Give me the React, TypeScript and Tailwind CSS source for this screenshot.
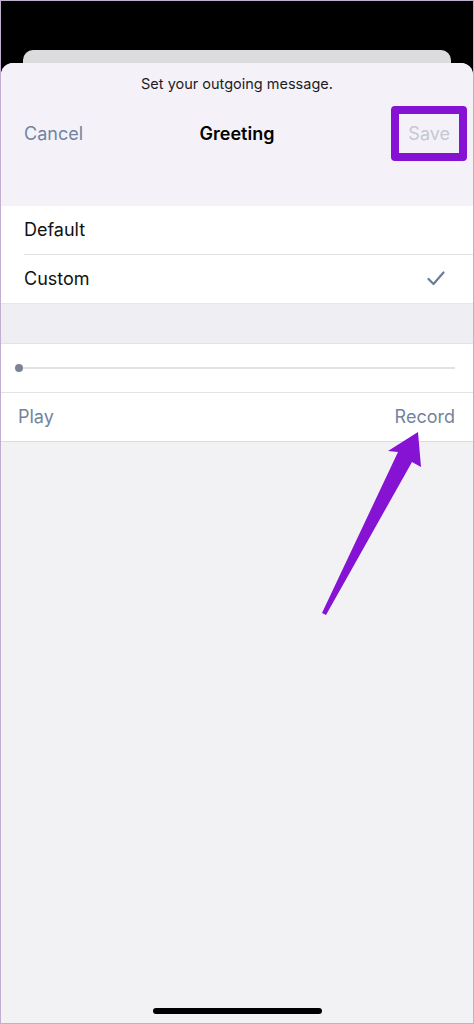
import React from "react";

export default function App() {
  return (
    <div
      className="relative w-[474px] h-[1024px] bg-black overflow-hidden flex flex-col border border-[#bfb0cf]"
      style={{ fontFamily: "Inter, 'Noto Sans', 'Liberation Sans', sans-serif" }}
    >
      <div className="h-[49px] shrink-0" />
      <div className="mx-[22px] h-[13px] shrink-0 rounded-t-[10px] bg-[#dcdcdf]" />
      <div className="flex-1 flex flex-col rounded-t-[12px] bg-[#f2f2f5] overflow-hidden">
        {/* header */}
        <div className="h-[143px] shrink-0 bg-[#f4f2f8] flex flex-col">
          <div className="pt-[11px] h-[20px] box-content text-center text-[14.5px] leading-[20px] text-[#1c1c1e]">
            Set your outgoing message.
          </div>
          <div className="mt-[17px] h-[44px] grid grid-cols-[1fr_auto_1fr] items-center px-[23px]">
            <span className="text-[18px] text-[#7284a0] justify-self-start">Cancel</span>
            <span className="text-[18px] font-semibold text-black">Greeting</span>
            <span className="text-[18px] text-[#c5c8d0] justify-self-end">Save</span>
          </div>
        </div>
        {/* options */}
        <div className="bg-white shrink-0">
          <div className="h-[48px] flex items-center pl-[23px] pb-[2px] text-[18px] text-[#111]">Default</div>
          <div className="ml-[23px] h-px bg-[#e3e3e6]" />
          <div className="h-[48px] flex items-center justify-between pl-[23px] pr-[28px] pb-[2px] text-[18px] text-[#111]">
            <span>Custom</span>
            <svg width="18" height="15" viewBox="0 0 18 15" fill="none">
              <path d="M1.5 8 L6.5 13 L16.5 1.5" stroke="#6b7c99" strokeWidth="2.2" strokeLinecap="round" strokeLinejoin="round" />
            </svg>
          </div>
        </div>
        <div className="h-px bg-[#e6e6ea] shrink-0" />
        <div className="h-[39px] shrink-0 bg-[#efeff3]" />
        {/* player */}
        <div className="bg-white shrink-0 border-t border-[#e3e3e6]">
          <div className="h-[48px] flex items-center pl-[14px] pr-[18px]">
            <div className="w-[8px] h-[8px] rounded-full bg-[#7d8396] shrink-0" />
            <div className="flex-1 h-[2px] bg-[#e2e2e5]" />
          </div>
          <div className="h-px bg-[#e3e3e6]" />
          <div className="h-[48px] flex items-center justify-between pl-[17px] pr-[18px] pb-[2px] text-[18px] text-[#7284a0]">
            <span>Play</span>
            <span>Record</span>
          </div>
        </div>
        <div className="h-px bg-[#dcdce0] shrink-0" />
        <div className="flex-1 flex flex-col justify-end items-center pb-[9px]">
          <div className="w-[169px] h-[6px] rounded-full bg-black" />
        </div>
      </div>

      {/* highlight box around Save */}
      <div className="absolute left-[390px] top-[105px] w-[76px] h-[55px] rounded-[4px] border-[8px] border-[#8612d4]" />

      {/* arrow */}
      <svg className="absolute left-0 top-0" width="474" height="1024" viewBox="0 0 474 1024">
        <polygon
          points="321,612 397,451 387,450 417,431 420,466 411,461 325,614"
          fill="#8612d4"
        />
      </svg>
    </div>
  );
}
